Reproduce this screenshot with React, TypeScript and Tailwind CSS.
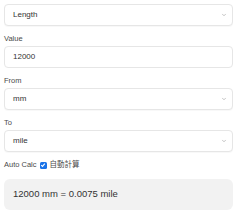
import { ChevronDown } from 'lucide-react';

function SelectBox({ value }: { value: string }) {
  return (
    <div className="h-[22px] border border-[#e6e6e6] rounded-[4px] bg-white flex items-center justify-between pl-[8px] pr-[5px] shadow-[0_1px_1px_rgba(0,0,0,0.03)]">
      <span className="text-[8px] text-[#333]">{value}</span>
      <ChevronDown className="w-[6px] h-[6px] text-[#888]" strokeWidth={2} />
    </div>
  );
}

function Label({ children }: { children: string }) {
  return <div className="text-[7.5px] leading-[10px] text-[#4a4a4a] mb-[2px]">{children}</div>;
}

export default function App() {
  return (
    <div className="w-[239px] h-[220px] bg-white p-[4px] pr-[6px] font-['Liberation_Sans','Noto_Sans_CJK_TC',sans-serif]">
      <SelectBox value="Length" />

      <div className="mt-[8px]">
        <Label>Value</Label>
        <div className="h-[22px] border border-[#e6e6e6] rounded-[4px] bg-white flex items-center pl-[8px]">
          <span className="text-[8px] text-[#333]">12000</span>
        </div>
      </div>

      <div className="mt-[8px]">
        <Label>From</Label>
        <SelectBox value="mm" />
      </div>

      <div className="mt-[8px]">
        <Label>To</Label>
        <SelectBox value="mile" />
      </div>

      <div className="mt-[8px] flex items-center gap-[3px] text-[7.5px] leading-[10px] text-[#4a4a4a]">
        <span>Auto Calc</span>
        <span className="w-[7px] h-[7px] rounded-[1.5px] bg-[#1a73e8] flex items-center justify-center">
          <svg viewBox="0 0 10 10" className="w-[6px] h-[6px]">
            <path d="M2 5.2 L4.2 7.3 L8 2.8" fill="none" stroke="white" strokeWidth="1.8" />
          </svg>
        </span>
        <span>自動計算</span>
      </div>

      <div className="mt-[9px] h-[31px] rounded-[6px] bg-[#f2f2f2] flex items-center pl-[9px]">
        <span className="text-[9.5px] text-[#333]">12000 mm = 0.0075 mile</span>
      </div>
    </div>
  );
}
